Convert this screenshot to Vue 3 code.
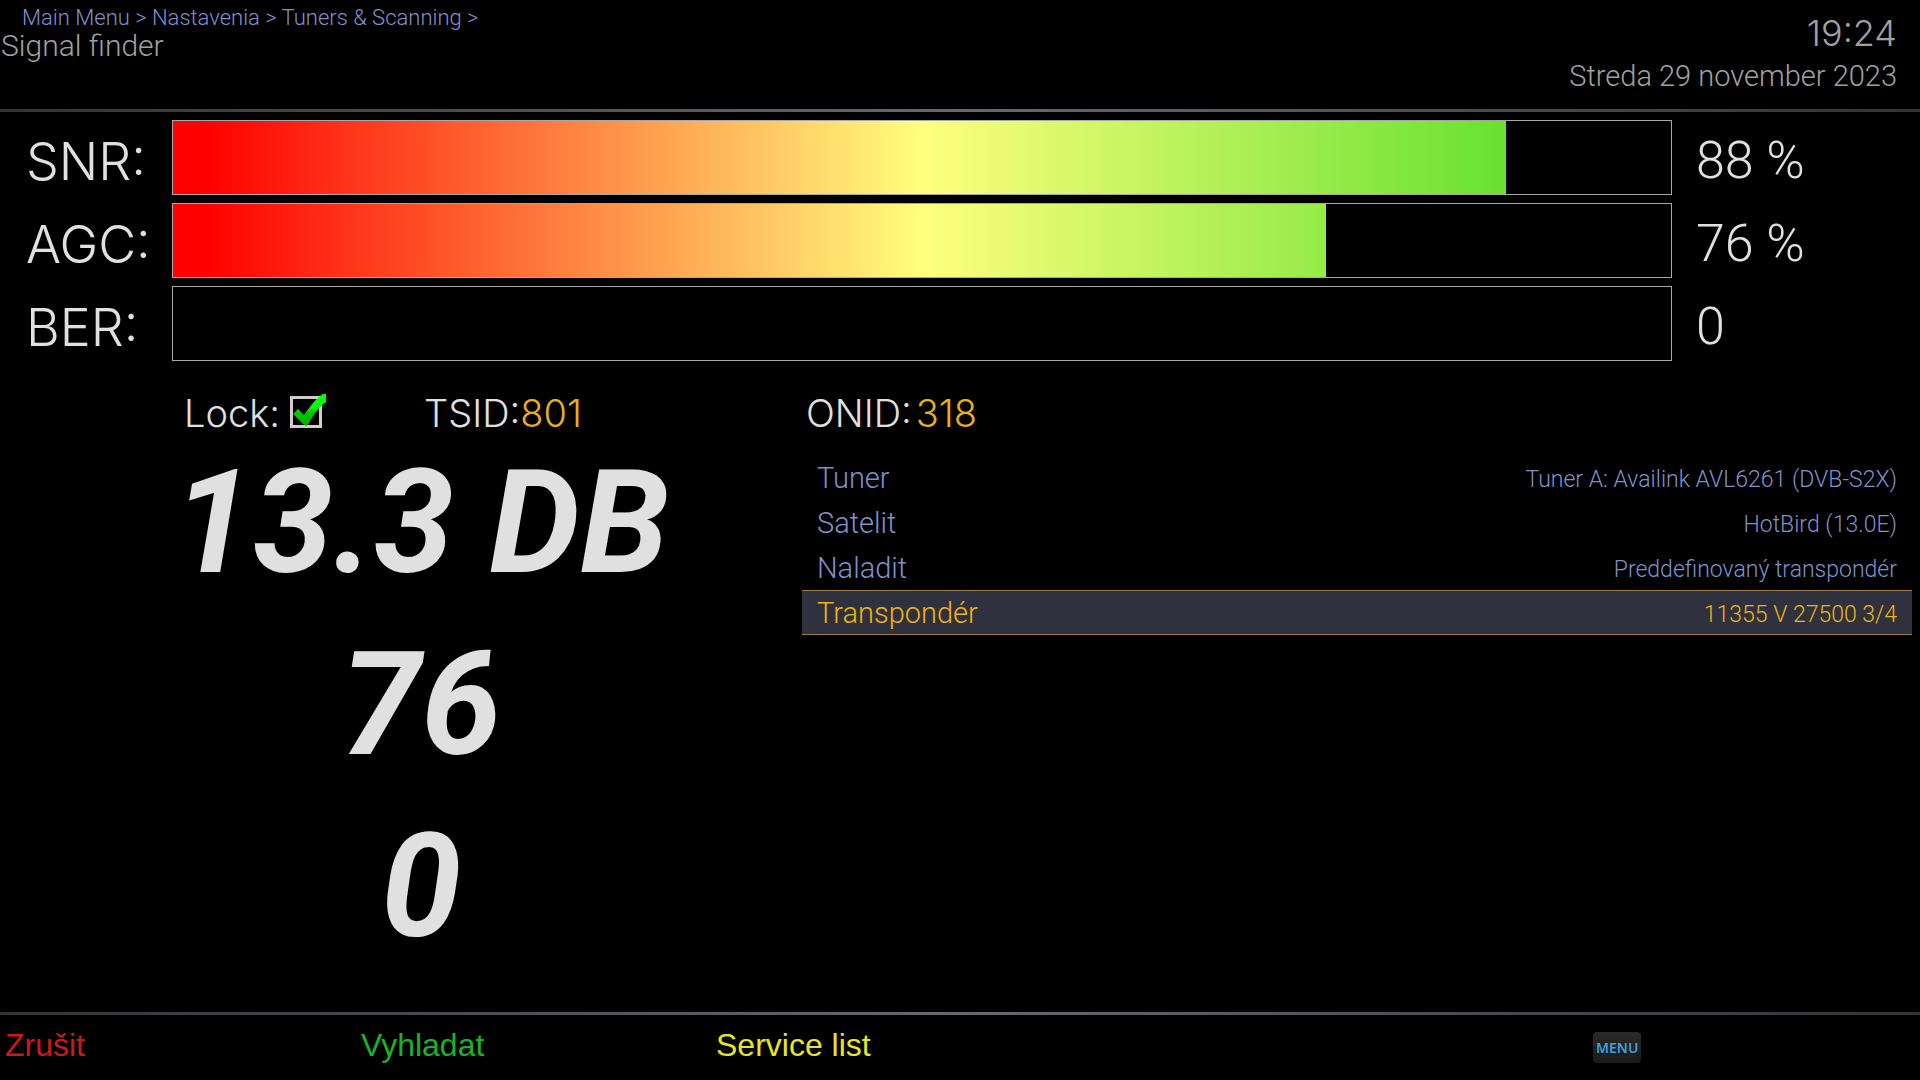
<script setup>
import { ref } from 'vue'

const crumbs = ['Main Menu', 'Nastavenia', 'Tuners & Scanning']

const meters = [
  { name: 'SNR', text: '88 %', fill: 89 },
  { name: 'AGC', text: '76 %', fill: 77 },
  { name: 'BER', text: '0', fill: 0 },
]

const settings = [
  { name: 'Tuner', value: 'Tuner A: Availink AVL6261 (DVB-S2X)' },
  { name: 'Satelit', value: 'HotBird (13.0E)' },
  { name: 'Naladit', value: 'Preddefinovaný transpondér' },
  { name: 'Transpondér', value: '11355 V 27500 3/4' },
]

const selected = ref(3)
const locked = ref(true)
</script>

<template>
  <div class="screen">
    <header class="top">
      <div>
        <nav class="crumbs">
          <template v-for="c in crumbs" :key="c"><a href="#">{{ c }}</a> &gt; </template>
        </nav>
        <h1 class="title">Signal finder</h1>
      </div>
      <div class="when">
        <time class="clock">19:24</time>
        <span class="date">Streda 29 november 2023</span>
      </div>
    </header>

    <main class="body">
      <section class="meters">
        <div v-for="m in meters" :key="m.name" class="meter">
          <span class="meter-name">{{ m.name }}:</span>
          <div class="track" role="meter" :aria-label="m.name" :aria-valuenow="m.fill">
            <div class="fill" :style="{ width: m.fill + '%' }"><div class="ramp"></div></div>
          </div>
          <span class="meter-value">{{ m.text }}</span>
        </div>
      </section>

      <div class="panes">
        <section class="left">
          <div class="status">
            <label class="lock">
              Lock:
              <span class="tick">
                <input v-model="locked" type="checkbox" />
                <svg v-if="locked" viewBox="0 0 36 34" aria-hidden="true">
                  <defs>
                    <linearGradient id="tickGreen" x1="0" y1="0" x2="0" y2="1">
                      <stop offset="0" stop-color="#08ff08" />
                      <stop offset="0.4" stop-color="#14f414" />
                      <stop offset="0.6" stop-color="#00c400" />
                      <stop offset="1" stop-color="#00b000" />
                    </linearGradient>
                  </defs>
                  <path d="M3 20 L8 15 L14 21 C20 13 25 5 33 0 L36 0 V8 C28 14 23 22 19 29 L16 32 L12 29 Z" fill="url(#tickGreen)" />
                </svg>
              </span>
            </label>
            <span>TSID:<b>801</b></span>
          </div>
          <output class="digits">13.3 DB</output>
          <output class="digits">76</output>
          <output class="digits">0</output>
        </section>

        <section class="right">
          <div class="status onid">ONID: <b>318</b></div>
          <table class="settings">
            <tbody>
              <tr v-for="(s, i) in settings" :key="s.name" :class="{ on: i === selected }" @click="selected = i">
                <th scope="row">{{ s.name }}</th>
                <td>{{ s.value }}</td>
              </tr>
            </tbody>
          </table>
        </section>
      </div>
    </main>

    <footer class="keys">
      <button class="red">Zrušit</button>
      <button class="green">Vyhladat</button>
      <button class="yellow">Service list</button>
      <button class="menu">MENU</button>
    </footer>
  </div>
</template>

<style>
body {
  background: #000;
}
</style>

<style scoped>
.screen {
  display: flex;
  flex-direction: column;
  min-height: 100vh;
  background: #000;
  color: #e0e0e0;
  font-family: Roboto, "Liberation Sans", sans-serif;
  font-weight: 300;
}
.clock,
.meter-name,
.status {
  font-family: Inter, "Liberation Sans", sans-serif;
}
.top,
.keys {
  border: 0 solid;
  border-image: linear-gradient(90deg, #333436, #676870 50%, #333436) 1;
}
.top {
  display: flex;
  justify-content: space-between;
  height: 109px;
  border-bottom-width: 3px;
  color: #a0a0a0;
}
.crumbs {
  padding: 4px 0 0 22px;
  font-size: 22px;
  line-height: 28px;
  color: #8090cc;
}
.crumbs a {
  color: inherit;
  text-decoration: none;
}
.title {
  margin: 0;
  padding-left: 1px;
  font-size: 30px;
  line-height: 28px;
  font-weight: 300;
}
.when {
  display: flex;
  flex-direction: column;
  align-items: flex-end;
  padding: 12px 23px 0 0;
}
.clock {
  font-size: 36px;
  line-height: 42px;
}
.date {
  font-size: 29px;
  line-height: 44px;
}
.body {
  flex: 1;
}
.meters {
  display: flex;
  flex-direction: column;
  gap: 8px;
  padding-top: 8px;
}
.meter {
  display: grid;
  grid-template-columns: 144px 1fr 224px;
  column-gap: 24px;
  align-items: center;
  height: 75px;
}
.meter-name {
  padding: 8px 0 0 26px;
  font-size: 52px;
  line-height: 60px;
}
.meter-value {
  padding-top: 6px;
  font-size: 52px;
  line-height: 60px;
}
.track {
  box-sizing: border-box;
  height: 75px;
  margin-left: 4px;
  border: 1px solid #a8a8a8;
  container-type: inline-size;
}
.fill {
  height: 100%;
  overflow: hidden;
}
/* the ramp spans the whole track, the fill only uncovers part of it */
.ramp {
  width: 100cqw;
  height: 100%;
  background: linear-gradient(90deg, #f00 2%, #ffff7e 50%, #3cda18);
}
.panes {
  display: grid;
  grid-template-columns: minmax(0, 802fr) minmax(0, 1110fr);
  padding: 26px 8px 0 0;
}
.status {
  display: flex;
  align-items: center;
  height: 52px;
  padding-left: 184px;
  font-size: 38px;
  line-height: 52px;
}
.status b {
  font-weight: 300;
  color: #e8b01c;
}
.onid {
  gap: 4px;
  padding-left: 4px;
}
.lock {
  display: flex;
  align-items: center;
  gap: 10px;
  width: 240px;
}
.tick {
  display: grid;
  padding-bottom: 4px;
}
.tick input,
.tick svg {
  grid-area: 1 / 1;
}
.tick input {
  box-sizing: border-box;
  appearance: none;
  width: 32px;
  height: 32px;
  margin: 2px 0 0;
  border: 3px solid #d2cdcd;
}
.tick svg {
  width: 36px;
  height: 34px;
}
.digits {
  display: block;
  height: 182px;
  padding-left: 40px;
  font-family: Roboto, "Liberation Sans", sans-serif;
  font-size: 144px;
  line-height: 168px;
  font-weight: 700;
  font-style: italic;
  text-align: center;
}
.settings {
  width: 100%;
  border-collapse: separate;
  border-spacing: 0;
  margin-top: 16px;
  color: #8090cc;
}
.settings th,
.settings td {
  box-sizing: border-box;
  height: 45px;
  padding: 0 15px;
  border: 0 solid #a07c30;
}
.settings th {
  font-size: 29px;
  font-weight: 300;
  text-align: left;
}
.settings td {
  padding-top: 4px;
  font-size: 23px;
  text-align: right;
}
.settings .on th,
.settings .on td {
  border-width: 1px 0;
  background: #30313e;
  color: #ecb414;
}
.keys {
  display: grid;
  grid-template-columns: 356fr 355fr 882fr 327fr;
  align-items: center;
  height: 65px;
  border-top-width: 3px;
}
.keys button {
  justify-self: start;
  border: 0;
  background: none;
  padding: 0 0 6px 5px;
  font: 400 32px/38px "Liberation Sans", Arial, sans-serif;
}
.keys .red {
  color: #d01818;
}
.keys .green {
  color: #18b428;
}
.keys .yellow {
  color: #e6e622;
}
.keys .menu {
  padding: 0 3px;
  border-radius: 4px;
  background: linear-gradient(#2a2a2a, #1a1a1a);
  font: 600 14px/31px "Noto Sans", sans-serif;
  color: #3fa0d8;
}
</style>
